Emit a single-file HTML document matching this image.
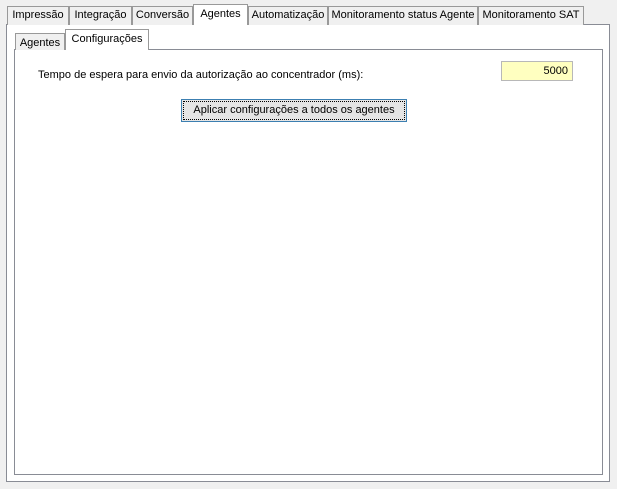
<!DOCTYPE html>
<html><head><style>
*{margin:0;padding:0;box-sizing:border-box}
body{width:617px;height:489px;background:#f0f0f0;position:relative;font-family:"Liberation Sans",sans-serif;font-size:11px;color:#000;overflow:hidden}
.a{position:absolute}
.tab{position:absolute;top:6px;height:19px;border:1px solid #999;border-bottom:none;background:#f0f0f0;text-align:center;line-height:17px;white-space:nowrap;overflow:hidden}
.sel{background:#fff;top:4px;height:21px;z-index:2;line-height:19px}
</style></head><body>
<div class="a" style="left:6px;top:24px;width:604px;height:458px;border:1px solid #898c95;background:#fff"></div>
<div class="tab" style="left:7px;width:62px">Impressão</div>
<div class="tab" style="left:69px;width:63px">Integração</div>
<div class="tab" style="left:132px;width:61px">Conversão</div>
<div class="tab sel" style="left:193px;width:55px;border-color:#999">Agentes</div>
<div class="tab" style="left:248px;width:80px">Automatização</div>
<div class="tab" style="left:328px;width:150px">Monitoramento status Agente</div>
<div class="tab" style="left:478px;width:106px">Monitoramento SAT</div>

<div class="a" style="left:14px;top:49px;width:589px;height:426px;border:1px solid #898c95;background:#fff"></div>
<div class="tab" style="left:15px;top:33px;height:17px;width:50px;line-height:17px;padding-top:1px">Agentes</div>
<div class="tab sel" style="left:65px;top:29px;height:21px;width:84px;line-height:19px">Configurações</div>

<div class="a" style="left:38px;top:68px;line-height:14px">Tempo de espera para envio da autorização ao concentrador (ms):</div>
<div class="a" style="left:501px;top:61px;width:72px;height:20px;background:#ffffc0;border:1px solid #b8b8b8;text-align:right;padding-right:4px;line-height:18px">5000</div>
<div class="a" style="left:181px;top:99px;width:226px;height:23px;border:1px solid #3c7fb1;background:#e5e5e5;padding:1px">
<div style="border:1px dotted #000;height:19px;text-align:center;line-height:17px">Aplicar configurações a todos os agentes</div></div>
</body></html>
